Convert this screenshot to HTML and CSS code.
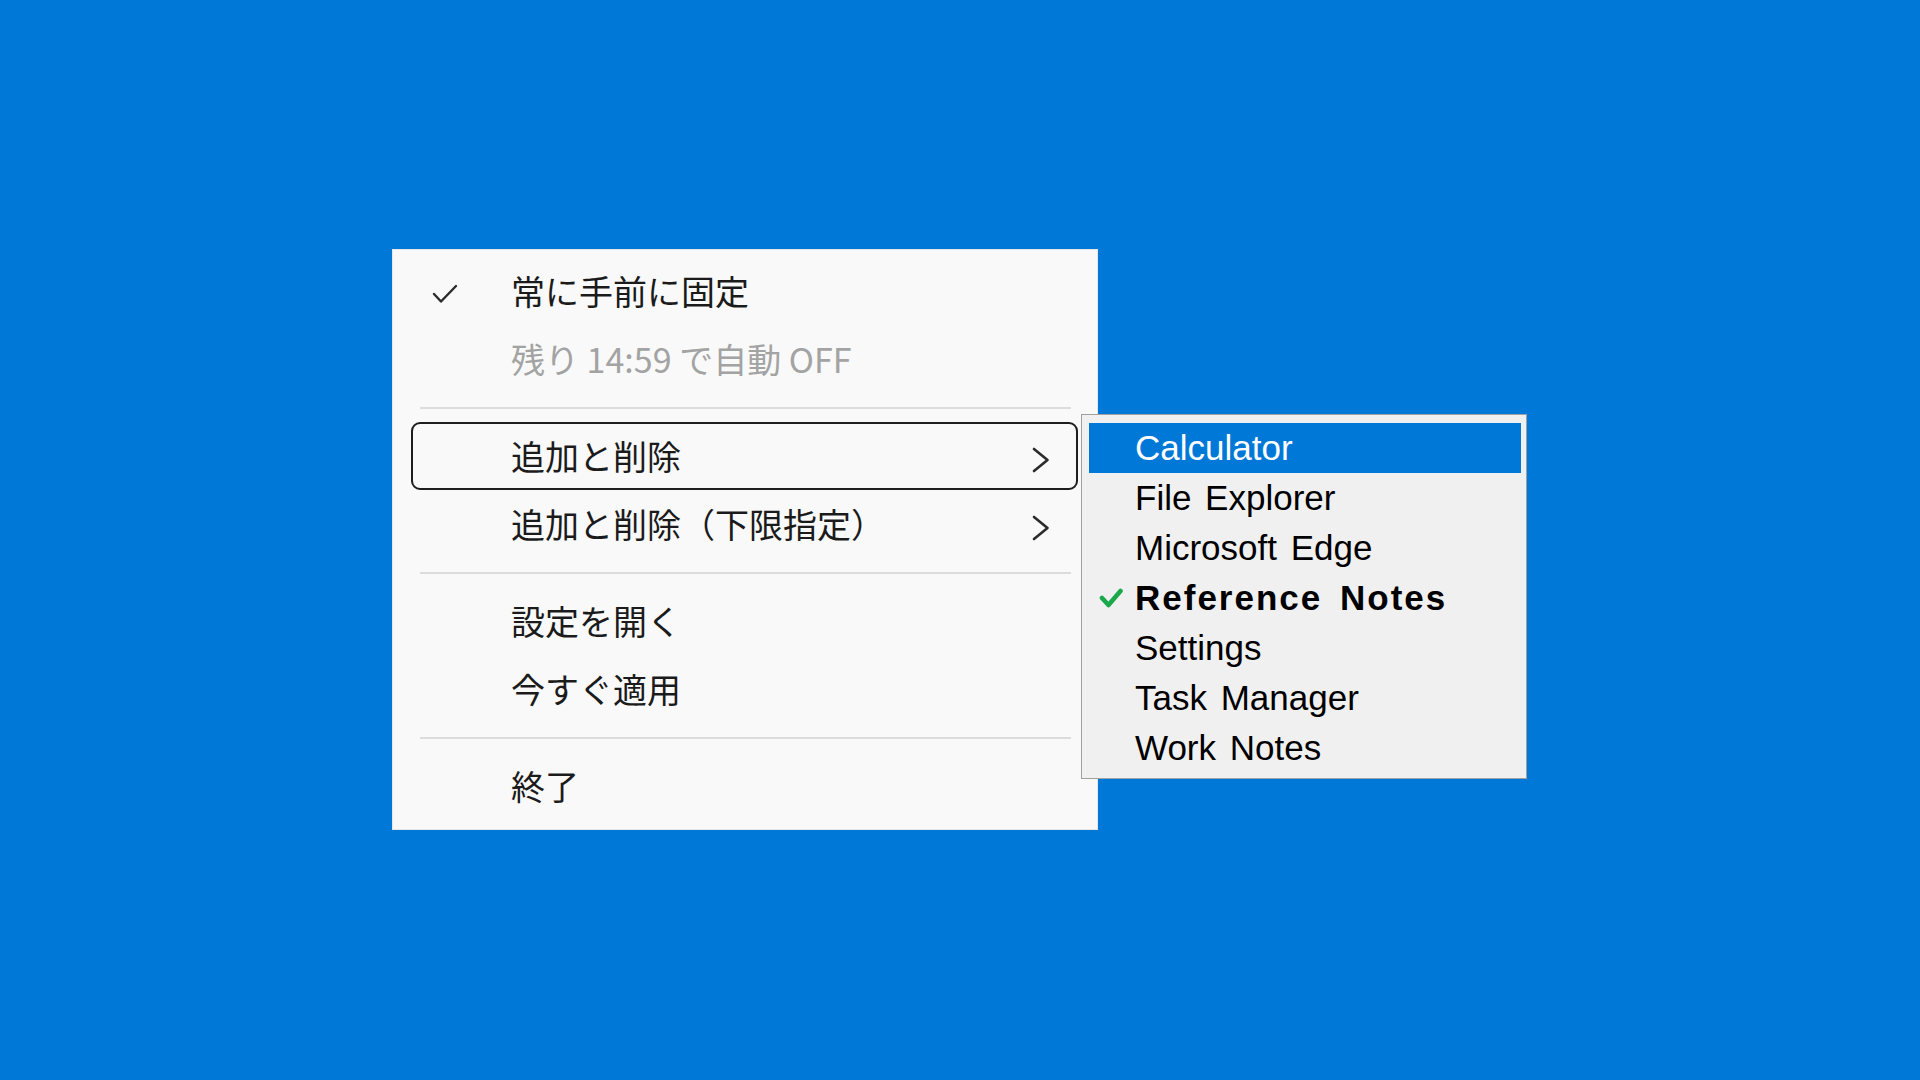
FILE: index.html
```html
<!DOCTYPE html>
<html lang="ja">
<head>
<meta charset="utf-8">
<title>Menu</title>
<link rel="stylesheet" href="styles.css">
</head>
<body>
<div class="desktop">
  <div class="menu">
    <div class="item">
      <span class="icon">
        <svg width="26" height="20" viewBox="0 0 26 20"><polyline points="2,10 9,17.5 24,2" fill="none" stroke="#2b2b2b" stroke-width="2.4" stroke-linecap="round" stroke-linejoin="round"/></svg>
      </span>
      <span class="label">常に手前に固定</span>
    </div>
    <div class="item disabled">
      <span class="icon"></span>
      <span class="label">残り 14:59 で自動 OFF</span>
    </div>
    <div class="sep"></div>
    <div class="item focused">
      <span class="icon"></span>
      <span class="label">追加と削除</span>
      <span class="chev">
        <svg width="18" height="26" viewBox="0 0 18 26"><polyline points="2,2 15.5,13 2,24" fill="none" stroke="#2b2b2b" stroke-width="2.6" stroke-linecap="round" stroke-linejoin="round"/></svg>
      </span>
    </div>
    <div class="item">
      <span class="icon"></span>
      <span class="label">追加と削除（下限指定）</span>
      <span class="chev">
        <svg width="18" height="26" viewBox="0 0 18 26"><polyline points="2,2 15.5,13 2,24" fill="none" stroke="#2b2b2b" stroke-width="2.6" stroke-linecap="round" stroke-linejoin="round"/></svg>
      </span>
    </div>
    <div class="sep"></div>
    <div class="item">
      <span class="icon"></span>
      <span class="label">設定を開く</span>
    </div>
    <div class="item">
      <span class="icon"></span>
      <span class="label">今すぐ適用</span>
    </div>
    <div class="sep"></div>
    <div class="item">
      <span class="icon"></span>
      <span class="label">終了</span>
    </div>
  </div>

  <div class="submenu">
    <div class="sitem selected"><span class="scheck"></span><span class="stext">Calculator</span></div>
    <div class="sitem"><span class="scheck"></span><span class="stext">File Explorer</span></div>
    <div class="sitem"><span class="scheck"></span><span class="stext">Microsoft Edge</span></div>
    <div class="sitem checked">
      <span class="scheck">
        <svg width="24" height="22" viewBox="0 0 24 22"><polyline points="3,11 9.5,18 21.5,4" fill="none" stroke="#1aa84a" stroke-width="4.6" stroke-linecap="round" stroke-linejoin="round"/></svg>
      </span>
      <span class="stext">Reference Notes</span>
    </div>
    <div class="sitem"><span class="scheck"></span><span class="stext">Settings</span></div>
    <div class="sitem"><span class="scheck"></span><span class="stext">Task Manager</span></div>
    <div class="sitem"><span class="scheck"></span><span class="stext">Work Notes</span></div>
  </div>
</div>
</body>
</html>
```

FILE: styles.css
```css
html, body {
  margin: 0;
  padding: 0;
  width: 1920px;
  height: 1080px;
  overflow: hidden;
  background: #0078d7;
}

.desktop {
  position: relative;
  width: 1920px;
  height: 1080px;
}

.menu {
  position: absolute;
  left: 392px;
  top: 249px;
  width: 706px;
  height: 581px;
  box-sizing: border-box;
  background: #f9f9f9;
  border: 1px solid #e6e6e6;
  padding: 7px 0 9px;
  display: flex;
  flex-direction: column;
  font-family: "Noto Sans CJK JP", "Noto Sans", sans-serif;
  font-size: 34px;
  color: #1b1b1b;
}

.item {
  height: 68px;
  box-sizing: border-box;
  margin: 0 19px 0 18px;
  border: 2px solid transparent;
  border-radius: 9px;
  display: flex;
  align-items: center;
  padding: 0 26px 0 19px;
}

.item.focused {
  border-color: #1e1e1e;
}

.icon {
  width: 26px;
  height: 20px;
  margin-top: 6px;
  display: flex;
  flex: none;
}

.label {
  margin-left: 53px;
  flex: 1;
  line-height: 1;
  white-space: nowrap;
}

.item.disabled .label {
  color: #a3a3a3;
}

.chev {
  width: 18px;
  height: 26px;
  margin-top: 7px;
  display: flex;
  flex: none;
}

.sep {
  height: 29px;
  display: flex;
  align-items: center;
  padding: 0 26px 0 27px;
}

.sep::before {
  content: "";
  flex: 1;
  height: 2px;
  background: #dcdcdc;
}

.submenu {
  position: absolute;
  left: 1081px;
  top: 414px;
  width: 446px;
  height: 365px;
  box-sizing: border-box;
  background: #f0f0f0;
  border: 1px solid #a0a0a0;
  padding: 8px 5px 0 7px;
  display: flex;
  flex-direction: column;
  font-family: "Liberation Sans", Arial, sans-serif;
  font-size: 35px;
  color: #000;
}

.sitem {
  height: 50px;
  display: flex;
  align-items: center;
  flex: none;
}

.sitem.selected {
  background: #0078d7;
  color: #fff;
}

.scheck {
  width: 24px;
  height: 22px;
  margin-left: 10px;
  display: flex;
  flex: none;
}

.stext {
  margin-left: 12px;
  white-space: nowrap;
  word-spacing: 4px;
}

.sitem.checked .stext {
  font-weight: bold;
  letter-spacing: 2px;
  word-spacing: 6px;
}
```
